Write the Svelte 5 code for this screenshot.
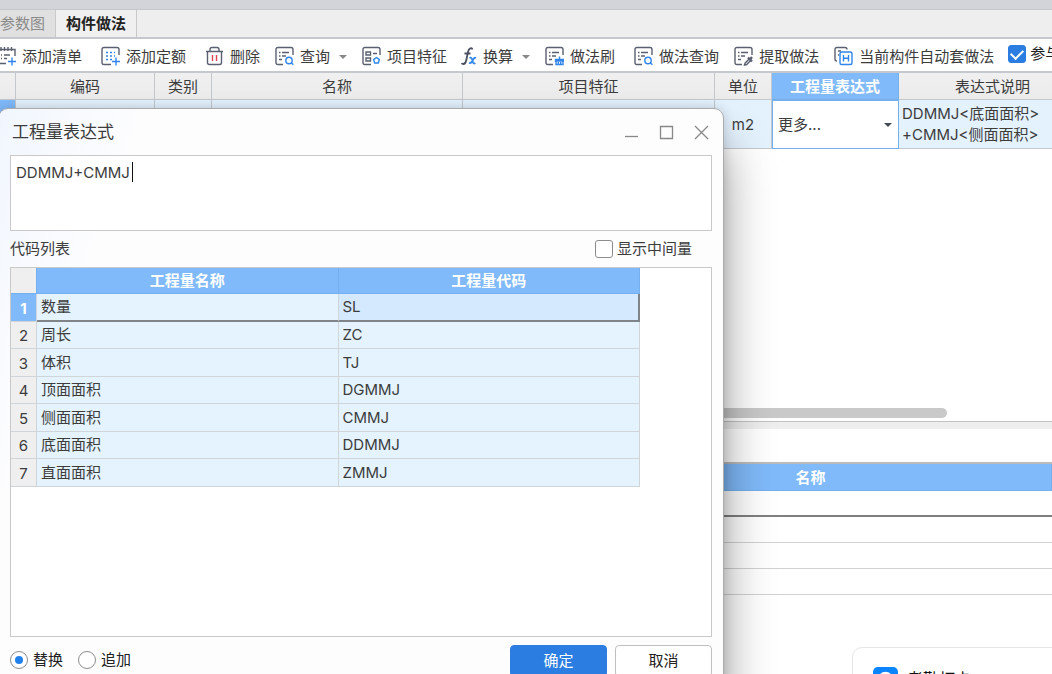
<script>
	const tools = [
		{ icon: 'list', label: '添加清单', wide: true },
		{ icon: 'quota', label: '添加定额', wide: true },
		{ icon: 'trash', label: '删除' },
		{ icon: 'search', label: '查询', menu: true },
		{ icon: 'feature', label: '项目特征' },
		{ icon: 'fx', label: '换算', menu: true },
		{ icon: 'brush', label: '做法刷', wide: true },
		{ icon: 'search', label: '做法查询' },
		{ icon: 'pick', label: '提取做法' },
		{ icon: 'auto', label: '当前构件自动套做法' }
	];

	const codes = [
		{ name: '数量', code: 'SL' },
		{ name: '周长', code: 'ZC' },
		{ name: '体积', code: 'TJ' },
		{ name: '顶面面积', code: 'DGMMJ' },
		{ name: '侧面面积', code: 'CMMJ' },
		{ name: '底面面积', code: 'DDMMJ' },
		{ name: '直面面积', code: 'ZMMJ' }
	];

	let expression = $state('DDMMJ+CMMJ');
	let selected = $state(0);
	let mode = $state('replace');
	let joined = $state(true);
	let showMiddle = $state(false);
</script>

<div class="page">
	<div class="strip"></div>

	<nav class="tabs">
		<button class="tab first">参数图</button>
		<button class="tab active">构件做法</button>
	</nav>

	<div class="toolbar">
		{#each tools as tool}
			<button class="tool" class:wide={tool.wide}>
				{#if tool.icon === 'fx'}
					<svg class="icon narrow" viewBox="0 0 16 20" aria-hidden="true">
						<path class="f" d="M11.500 3.500Q11 1.800 9.300 2.300Q7.600 3 7 6L5.200 14.500Q4.500 18 2.300 18Q1 18 .8 17M3.500 7.500h6" />
						<path class="x" d="M8.500 12q1.800-1 2.500 1l1 3.500q.6 1.700 2.300.5M15 12q-1.400-.8-2.500 1l-2 3q-1 1.600-2.500.8" />
					</svg>
				{:else}
					<svg class="icon" viewBox="0 0 20 20" aria-hidden="true">
						{#if tool.icon === 'list'}
							<path d="M1 12V3.500H19V10M5 1v4M8.500 1v4M12 1v4M15.500 1v4M5 9h1M8 9h6M5 12.500h1M8 12.500h3M1 12v5.500H10" />
							<path class="blue" d="M16 11.500v8M12 15.500h8" />
						{:else if tool.icon === 'quota'}
							<path d="M11 18.500H4Q2 18.500 2 16.500V3.500Q2 1.500 4 1.500H17Q19 1.500 19 3.500V9" />
							<path class="blue dots" d="M6 6.500h9M6 10h9M6 13.500h6" />
							<path class="blue" d="M16 11.500v8M12 15.500h8" />
						{:else if tool.icon === 'trash'}
							<path d="M2 5.500H19M6 5V3.500Q6 1.500 8 1.500H13Q15 1.500 15 3.500V5M3.500 6V16.500Q3.500 18.500 5.500 18.500H15.500Q17.500 18.500 17.500 16.500V6" />
							<path class="red" d="M8.500 9v6M12.500 9v6" />
						{:else if tool.icon === 'auto'}
							<path d="M4 15Q2 15 2 13V3.500Q2 1.500 4 1.500H12Q14 1.500 14 3.500M5 5h3M5 9h1" />
							<rect class="blue" x="7" y="6" width="12" height="12.500" rx="1.500" />
							<path class="blue" d="M10.500 9v6.500M15.500 9v6.500M10.500 12.300h5" />
						{:else if tool.icon === 'feature'}
							<path d="M10 18.500H4Q2 18.500 2 16.500V3.500Q2 1.500 4 1.500H17Q19 1.500 19 3.500V9M5 6h4.500v3H5zM5 12h4.500v3H5zM12 7.500h4" />
							<path class="blue" d="M15.500 11.500l2.900 2.100-1.100 3.400h-3.600l-1.100-3.400z" />
						{:else}
							<path d="M9 18.500H4Q2 18.500 2 16.500V3.500Q2 1.500 4 1.500H17Q19 1.500 19 3.500V9M5 6.500h1.500M8 6.500h7M5 10h1.500M8 10h4M5 13.500h3" />
							{#if tool.icon === 'search'}
								<circle class="blue" cx="15" cy="14.500" r="3.200" />
								<path class="blue" d="M17.300 16.800l2 2" />
							{:else if tool.icon === 'brush'}
								<path class="blue" d="M15.500 10.500v3M11.500 15v-1.500h8V15zM12 15.500v3h7v-3M14.300 16v2.500M16.700 16v2.500" />
							{:else}
								<path d="M11.500 19l.7-2 4-4 1.500 1.500-4 4z" />
								<path class="thick" d="M15 11.500l4 4M17 13.500l2-2.500" />
							{/if}
						{/if}
					</svg>
				{/if}
				<span>{tool.label}</span>
				{#if tool.menu}<i class="arrow"></i>{/if}
			</button>
		{/each}
		<label class="check join">
			<input type="checkbox" bind:checked={joined} />
			<span>参与自动套</span>
		</label>
	</div>

	<div class="grid-area">
		<table class="grid">
			<colgroup>
				<col class="c-no" /><col class="c-code" /><col class="c-type" /><col class="c-name" />
				<col class="c-feature" /><col class="c-unit" /><col class="c-exp" /><col class="c-desc" />
			</colgroup>
			<thead>
				<tr>
					<td></td>
					<th>编码</th>
					<th>类别</th>
					<th>名称</th>
					<th>项目特征</th>
					<th>单位</th>
					<th class="current">工程量表达式</th>
					<th>表达式说明</th>
				</tr>
			</thead>
			<tbody>
				<tr>
					<td class="marker"></td>
					<td></td>
					<td></td>
					<td></td>
					<td></td>
					<td class="unit">m2</td>
					<td class="editing">
						<div class="combo">
							<select aria-label="工程量表达式"><option>更多...</option></select>
							<i class="arrow dark"></i>
						</div>
					</td>
					<td class="desc">DDMMJ&lt;底面面积&gt;<br />+CMMJ&lt;侧面面积&gt;</td>
				</tr>
			</tbody>
		</table>
		<div class="scrollbar"><div class="thumb"></div></div>
	</div>

	<div class="splitter"></div>

	<div class="lower">
		<table class="grid results">
			<colgroup><col class="r-lead" /><col /></colgroup>
			<thead>
				<tr><td></td><th>名称</th></tr>
			</thead>
			<tbody>
				{#each [0, 1, 2, 3] as row}
					<tr class:focused={row === 0}><td></td><td></td></tr>
				{/each}
			</tbody>
		</table>
	</div>

	<aside class="toast">
		<svg class="toast-icon" viewBox="0 0 26 26" aria-hidden="true">
			<rect width="26" height="26" rx="5" />
			<circle cx="13" cy="13" r="8" />
		</svg>
		<span>考勤打卡</span>
	</aside>

	<div class="dialog" role="dialog" aria-labelledby="dialog-title">
		<header class="titlebar">
			<h1 id="dialog-title">工程量表达式</h1>
			<button class="win" aria-label="最小化">
				<svg viewBox="0 0 15 15"><path d="M1 11.500h13" /></svg>
			</button>
			<button class="win" aria-label="最大化">
				<svg viewBox="0 0 15 15"><path d="M1.500 1.500h12v12h-12z" /></svg>
			</button>
			<button class="win" aria-label="关闭">
				<svg viewBox="0 0 15 15"><path d="M1 1l13 13M14 1L1 14" /></svg>
			</button>
		</header>

		<div class="editor">
			<textarea aria-label="工程量表达式" spellcheck="false" bind:value={expression}></textarea>
			<i class="cursor"></i>
		</div>

		<div class="list-head">
			<span>代码列表</span>
			<label class="check">
				<input type="checkbox" bind:checked={showMiddle} />
				<span>显示中间量</span>
			</label>
		</div>

		<div class="list">
			<table class="codes">
				<thead>
					<tr><td></td><th>工程量名称</th><th>工程量代码</th></tr>
				</thead>
				<tbody>
					{#each codes as item, i}
						<tr class:selected={selected === i} onclick={() => (selected = i)}>
							<th scope="row">{i + 1}</th>
							<td>{item.name}</td>
							<td>{item.code}</td>
						</tr>
					{/each}
				</tbody>
			</table>
		</div>

		<footer class="actions">
			<label class="check">
				<input type="radio" value="replace" bind:group={mode} />
				<span>替换</span>
			</label>
			<label class="check">
				<input type="radio" value="append" bind:group={mode} />
				<span>追加</span>
			</label>
			<button class="btn primary">确定</button>
			<button class="btn">取消</button>
		</footer>
	</div>
</div>

<style>
	:global(body) {
		margin: 0;
	}

	.page {
		position: relative;
		display: flex;
		flex-direction: column;
		height: 100vh;
		overflow: hidden;
		background: #fff;
		color: #3c3c3c;
		font: 15px/20px Inter, 'Noto Sans CJK SC', sans-serif;
	}

	.page :is(button, select, textarea) {
		font: inherit;
		color: inherit;
	}

	.page * {
		box-sizing: border-box;
	}

	.strip {
		flex: none;
		height: 10px;
		background: #d3d4da;
		border-bottom: 1px solid #c6c7cb;
	}

	.tabs {
		flex: none;
		display: flex;
		height: 29px;
		background: #eee;
		border-bottom: 2px solid #c5c8cd;
	}

	.tab {
		padding: 0 10px;
		border: 0;
		border-right: 1px solid #c9c9c9;
		background: #f0f0f0;
		white-space: nowrap;
	}

	.page .tab.first {
		padding-left: 0;
		background: #e0e0e0;
		color: #8b8b8b;
	}

	.page .tab.active {
		color: #222;
		font-weight: 700;
	}

	.toolbar {
		flex: none;
		display: flex;
		align-items: center;
		gap: 14px;
		height: 34px;
		margin-left: -4px;
		border-bottom: 2px solid #c5c8cd;
		white-space: nowrap;
	}

	.tool {
		flex: none;
		display: flex;
		align-items: center;
		gap: 6px;
		padding: 3px 0 0;
		border: 0;
		background: none;
	}

	.tool.wide {
		padding-right: 4px;
	}

	.icon {
		width: 20px;
		height: 20px;
		margin-bottom: 2px;
		fill: none;
		stroke: #5b6070;
		stroke-width: 1.4;
	}

	.icon.narrow {
		width: 16px;
	}

	.icon .blue {
		stroke: #2f85ec;
	}

	.icon .red {
		stroke: #e0444e;
	}

	.icon .dots {
		stroke-dasharray: 2 2;
	}

	.icon .thick {
		stroke-width: 2.4;
	}

	.icon .f {
		stroke: #4b5160;
		stroke-width: 1.8;
	}

	.icon .x {
		stroke: #2f85ec;
		stroke-width: 1.8;
	}

	.arrow {
		width: 0;
		margin: 0 0 0 3px;
		border: 4px solid transparent;
		border-top-color: #888;
		border-bottom: 0;
	}

	.arrow.dark {
		border-top-color: #444b55;
	}

	.check {
		display: flex;
		align-items: center;
		gap: 4px;
		white-space: nowrap;
	}

	.join {
		flex: none;
		padding-bottom: 2px;
		color: #222;
	}

	.check input {
		display: grid;
		place-items: center;
		flex: none;
		appearance: none;
		width: 18px;
		height: 18px;
		margin: 0;
		border: 1px solid #8d8d8d;
		border-radius: 3px;
		background: #fff;
	}

	.check input[type='checkbox']:checked {
		border-color: #2b7de1;
		background: #2b7de1;
	}

	.check input[type='checkbox']:checked::after {
		content: '';
		width: 6px;
		height: 10px;
		margin-bottom: 3px;
		border: solid #fff;
		border-width: 0 2px 2px 0;
		transform: rotate(45deg);
	}

	.check input[type='radio'] {
		border-radius: 50%;
	}

	.check input[type='radio']:checked::after {
		content: '';
		width: 8px;
		height: 8px;
		border-radius: 50%;
		background: #2280ea;
	}

	.grid-area {
		flex: none;
		display: flex;
		flex-direction: column;
		height: 348px;
		overflow: hidden;
	}

	.grid {
		width: 1087px;
		table-layout: fixed;
		border-collapse: separate;
		border-spacing: 0;
	}

	.grid :is(th, td) {
		padding: 0;
		border-right: 1px solid #c4c8cc;
		border-bottom: 1px solid #c4c8cc;
		font-weight: 400;
	}

	.grid th {
		padding-top: 2px;
	}

	.grid thead tr {
		height: 27px;
		background: linear-gradient(#f0f0f0, #ebebeb);
	}

	.grid tbody td {
		height: 49px;
		background: #e4f2fe;
	}

	.c-no { width: 16px; }
	.c-code { width: 139px; }
	.c-type { width: 57px; }
	.c-name { width: 251px; }
	.c-feature { width: 252px; }
	.c-unit { width: 57px; }
	.c-exp { width: 127px; }
	.c-desc { width: 188px; }

	.grid .current {
		border-color: #75b0ee;
		background: #80bafa;
		color: #fff;
		font-weight: 700;
	}

	.grid tbody .marker {
		background: #80bafa;
	}

	.grid tbody .unit {
		padding-top: 2px;
		text-align: center;
	}

	.grid tbody .editing {
		border: 1px solid #75b0ee;
		background: #fff;
	}

	.combo {
		display: flex;
		align-items: center;
		padding: 0 6px 0 5px;
	}

	.combo select {
		flex: 1;
		min-width: 0;
		padding: 0;
		border: 0;
		appearance: none;
		background: none;
	}

	.grid tbody .desc {
		padding-left: 3px;
		line-height: 21px;
		white-space: nowrap;
	}

	.scrollbar {
		margin-top: auto;
		padding-bottom: 3px;
	}

	.thumb {
		width: 90%;
		height: 10px;
		border-radius: 5px;
		background: #c9c9c9;
	}

	.splitter {
		flex: none;
		height: 8px;
		border-top: 1px solid #c2c2c2;
		background: #eee;
	}

	.lower {
		flex: 1;
		margin-top: 33px;
		border-top: 2px solid #bbb;
	}

	.results {
		width: 100%;
	}

	.r-lead {
		width: 570px;
	}

	.results thead tr {
		background: #80bafa;
		color: #fff;
	}

	.results thead :is(th, td) {
		border-color: #75b0ee;
		font-weight: 700;
	}

	.results tbody td {
		height: 26px;
		border-right: 0;
		border-color: #d2d2d2;
		background: #fff;
	}

	.results .focused td {
		border-bottom: 2px solid #808080;
	}

	.toast {
		position: absolute;
		right: -30px;
		bottom: -60px;
		display: flex;
		align-items: flex-start;
		gap: 9px;
		width: 230px;
		height: 87px;
		padding: 19px 20px;
		border: 1px solid #e6e6e6;
		border-radius: 10px;
		background: #fff;
		color: #111;
		font-size: 16px;
		line-height: 24px;
	}

	.toast-icon {
		width: 25px;
		height: 25px;
		fill: #0b84ff;
	}

	.toast-icon circle {
		fill: #fff;
	}

	.dialog {
		position: absolute;
		top: 108px;
		left: -2px;
		display: flex;
		flex-direction: column;
		width: 726px;
		padding: 0 11px 6px;
		border: 1px solid #a9abad;
		border-radius: 10px;
		background: linear-gradient(110deg, #f1f6fe, #fdfdfe 16%, #fdfdfe);
		box-shadow: 0 38px 50px rgba(0, 0, 0, 0.4), 0 0 12px rgba(0, 0, 0, 0.16);
	}

	.titlebar {
		display: flex;
		align-items: center;
		gap: 20px;
		height: 46px;
		padding: 0 3px 0 2px;
	}

	h1 {
		flex: 1;
		margin: 0;
		font-size: 17px;
		font-weight: 400;
		line-height: 24px;
	}

	.win {
		width: 15px;
		height: 15px;
		padding: 0;
		border: 0;
		background: none;
	}

	.win svg {
		display: block;
		fill: none;
		stroke: #888;
		stroke-width: 1.3;
	}

	.editor {
		position: relative;
		display: flex;
	}

	textarea {
		flex: 1;
		height: 76px;
		padding: 7px 5px;
		border: 1px solid #c9c9c9;
		outline: 0;
		background: #fff;
		resize: none;
	}

	.cursor {
		position: absolute;
		top: 7px;
		left: 122px;
		width: 1px;
		height: 20px;
		background: #111;
	}

	.list-head {
		display: flex;
		align-items: center;
		justify-content: space-between;
		height: 36px;
		padding-right: 20px;
	}

	.list {
		height: 370px;
		border: 1px solid #c9c9c9;
		background: #fff;
	}

	.codes {
		width: 629px;
		table-layout: fixed;
		border-collapse: separate;
		border-spacing: 0;
	}

	.codes :is(th, td) {
		height: 27px;
		padding: 0;
		border-right: 1px solid #d0d5d9;
		border-bottom: 1px solid #d0d5d9;
		background: #e4f3fe;
	}

	.codes thead :is(th, td) {
		height: 26px;
		border-color: #75b0ee;
		background: #80bafa;
		color: #fff;
	}

	.codes thead td {
		width: 26px;
		background: #efefef;
	}

	.codes tbody tr:nth-child(odd) :is(th, td) {
		height: 28px;
	}

	.codes tbody td {
		padding-left: 4px;
	}

	.codes tbody th {
		padding-top: 2px;
		background: #efefef;
		font-weight: 400;
	}

	.codes tbody .selected th {
		background: #80bafa;
		color: #fff;
		font-weight: 700;
	}

	.codes .selected td {
		border-bottom: 2px solid #808488;
	}

	.codes .selected td:last-child {
		border-right: 2px solid #808488;
		background: #d4e9fe;
	}

	.actions {
		display: flex;
		align-items: center;
		gap: 8px;
		height: 48px;
		color: #222;
	}

	.actions .check {
		gap: 5px;
		margin-right: 7px;
		padding-bottom: 2px;
	}

	.btn {
		width: 97px;
		height: 32px;
		padding: 0;
		border: 1px solid #bfbfbf;
		border-radius: 4px;
		background: #fff;
	}

	.page .btn.primary {
		margin-left: auto;
		border-color: #2b7de1;
		background: #2b7de1;
		color: #fff;
	}
</style>
